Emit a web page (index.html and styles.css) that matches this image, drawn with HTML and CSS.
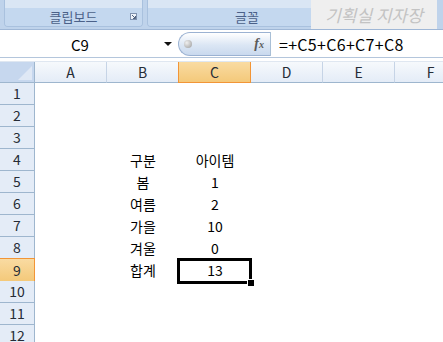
FILE: index.html
```html
<!DOCTYPE html>
<html>
<head>
  <meta charset="UTF-8" />
  <title>기획실 지자장</title>
  <link rel="stylesheet" href="styles.css">
</head>
<body>
  <header class="ribbon">
    <div class="group clipboard">
      <div class="groupTop"></div>
      <div class="groupLabel">
        <span>클립보드</span>
        <svg class="launcher" width="7" height="7" viewBox="0 0 7 7">
          <rect x="0.5" y="0.5" width="6" height="6" fill="#eef3fa" stroke="#8093b0"></rect>
          <path d="M2 2 L5.5 5.5 M5.5 3 V5.5 H3" stroke="#50627f" fill="none"></path>
        </svg>
      </div>
    </div>
    <div class="group font">
      <div class="groupTop"></div>
      <div class="groupLabel"><span>글꼴</span></div>
    </div>
    <div class="watermark">기획실 지자장</div>
  </header>

  <div class="formulaBar">
    <div class="nameBox">
      <span class="cellName">C9</span>
      <span class="dropArrow"></span>
    </div>
    <div class="fxButton">
      <span class="knob"></span>
      <span class="fx">f<small>x</small></span>
    </div>
    <div class="formula">=+C5+C6+C7+C8</div>
  </div>

  <main class="sheet">
    <div class="row colHeads">
      <div class="corner"><span class="cornerTri"></span></div>
      <div class="ch">A</div>
      <div class="ch">B</div>
      <div class="ch active">C</div>
      <div class="ch">D</div>
      <div class="ch">E</div>
      <div class="ch">F</div>
    </div>
    <div class="row"><div class="rh">1</div><div class="c"></div><div class="c"></div><div class="c"></div><div class="c"></div><div class="c"></div><div class="c"></div></div>
    <div class="row"><div class="rh">2</div><div class="c"></div><div class="c"></div><div class="c"></div><div class="c"></div><div class="c"></div><div class="c"></div></div>
    <div class="row"><div class="rh">3</div><div class="c"></div><div class="c"></div><div class="c"></div><div class="c"></div><div class="c"></div><div class="c"></div></div>
    <div class="row"><div class="rh">4</div><div class="c"></div><div class="c">구분</div><div class="c">아이템</div><div class="c"></div><div class="c"></div><div class="c"></div></div>
    <div class="row"><div class="rh">5</div><div class="c"></div><div class="c">봄</div><div class="c">1</div><div class="c"></div><div class="c"></div><div class="c"></div></div>
    <div class="row"><div class="rh">6</div><div class="c"></div><div class="c">여름</div><div class="c">2</div><div class="c"></div><div class="c"></div><div class="c"></div></div>
    <div class="row"><div class="rh">7</div><div class="c"></div><div class="c">가을</div><div class="c">10</div><div class="c"></div><div class="c"></div><div class="c"></div></div>
    <div class="row"><div class="rh">8</div><div class="c"></div><div class="c">겨울</div><div class="c">0</div><div class="c"></div><div class="c"></div><div class="c"></div></div>
    <div class="row"><div class="rh active">9</div><div class="c"></div><div class="c">합계</div><div class="c selected">13<span class="fillHandle"></span></div><div class="c"></div><div class="c"></div><div class="c"></div></div>
    <div class="row"><div class="rh">10</div><div class="c"></div><div class="c"></div><div class="c"></div><div class="c"></div><div class="c"></div><div class="c"></div></div>
    <div class="row"><div class="rh">11</div><div class="c"></div><div class="c"></div><div class="c"></div><div class="c"></div><div class="c"></div><div class="c"></div></div>
    <div class="row"><div class="rh">12</div><div class="c"></div><div class="c"></div><div class="c"></div><div class="c"></div><div class="c"></div><div class="c"></div></div>
  </main>
</body>
</html>
```

FILE: styles.css
```css
body {
  margin: 0;
  width: 443px;
  height: 342px;
  overflow: hidden;
  background: #fff;
  font-family: "Noto Sans CJK KR", "Noto Sans", sans-serif;
}

/* ribbon */
.ribbon {
  position: relative;
  display: flex;
  gap: 4px;
  height: 29px;
  padding-left: 4px;
  background: #bfd3eb;
  border-bottom: 1px solid #9fb7d6;
  overflow: hidden;
}

.group {
  display: flex;
  flex-direction: column;
  height: 27px;
  border: 1px solid #a9c1de;
  border-top: none;
  border-radius: 0 0 4px 4px;
  box-sizing: border-box;
  overflow: hidden;
}

.clipboard {
  width: 139px;
}

.font {
  width: 200px;
}

.groupTop {
  height: 8px;
  background: #dae6f4;
}

.groupLabel {
  flex: 1;
  display: flex;
  align-items: center;
  justify-content: center;
  position: relative;
  background: #c4d8ef;
  font-size: 13px;
  color: #4b6189;
  line-height: 18px;
}

.launcher {
  position: absolute;
  right: 5px;
  top: 5px;
}

.watermark {
  position: absolute;
  top: 0;
  left: 311px;
  width: 126px;
  height: 29px;
  background: #efefef;
  color: #c3c3c3;
  font-size: 17px;
  font-style: italic;
  line-height: 29px;
  text-align: center;
}

/* formula bar */
.formulaBar {
  display: flex;
  align-items: stretch;
  height: 24px;
  padding: 2px 0 1px;
  border-bottom: 1px solid #b4c6dc;
  background: #fff;
}

.nameBox {
  width: 175px;
  display: flex;
  align-items: center;
  position: relative;
  font-size: 15px;
}

.cellName {
  flex: 1;
  text-align: center;
  padding-right: 4px;
}

.dropArrow {
  width: 0;
  height: 0;
  border-left: 4px solid transparent;
  border-right: 4px solid transparent;
  border-top: 4px solid #111;
  margin-right: 3px;
}

.fxButton {
  width: 92px;
  margin-left: 3px;
  display: flex;
  align-items: center;
  justify-content: space-between;
  border: 1px solid #9bb2d2;
  border-right: none;
  border-radius: 12px 0 0 12px;
  background: linear-gradient(#ffffff, #dbe6f4 55%, #c9d9ee);
  box-sizing: border-box;
  padding: 0 6px 0 5px;
}

.knob {
  width: 8px;
  height: 8px;
  border-radius: 50%;
  background: radial-gradient(circle at 35% 35%, #f0f0f0, #9a9a9a);
}

.fx {
  font-family: "Liberation Serif", serif;
  font-style: italic;
  font-weight: bold;
  font-size: 14px;
  color: #5a5a5a;
}

.fx small {
  font-size: 10px;
}

.formula {
  flex: 1;
  border-left: 1px solid #a9bfd6;
  padding-left: 8px;
  font-size: 16px;
  letter-spacing: 0.3px;
  line-height: 24px;
  color: #000;
}

.formulaBar + .sheet {
  margin-top: 3px;
  border-top: 1px solid #dfe7f1;
}

/* sheet */
.sheet {
  width: 470px;
}

.row {
  display: grid;
  grid-template-columns: 35px repeat(6, 72px);
  height: 22px;
}

.colHeads {
  height: 21px;
}

.corner {
  position: relative;
  background: #c6d7ee;
  border-right: 1px solid #9eb6ce;
  border-bottom: 1px solid #9eb6ce;
}

.cornerTri {
  position: absolute;
  right: 2px;
  bottom: 2px;
  width: 0;
  height: 0;
  border-left: 14px solid transparent;
  border-bottom: 14px solid #dfe8f5;
}

.ch {
  background: linear-gradient(#f6f9fc, #e4ecf7);
  border-right: 1px solid #c6d4e6;
  border-bottom: 1px solid #9eb6ce;
  text-align: center;
  font-size: 14px;
  line-height: 20px;
  color: #262c36;
}

.ch.active {
  background: linear-gradient(#f9dba2, #f4c97a);
  border: 1px solid #f29536;
  border-top: none;
  margin-left: -1px;
}

.rh {
  background: #e4ecf7;
  border-right: 1px solid #9eb6ce;
  border-bottom: 1px solid #9eb6ce;
  text-align: center;
  font-size: 14px;
  line-height: 21px;
  color: #262c36;
}

.rh.active {
  background: linear-gradient(#f9dba2, #f4c97a);
  border: 1px solid #f29536;
  border-left: none;
  margin-top: -1px;
  line-height: 22px;
}

.c {
  position: relative;
  text-align: center;
  font-size: 14px;
  line-height: 22px;
  color: #000;
  white-space: nowrap;
}

.selected::before {
  content: "";
  position: absolute;
  top: -1px;
  left: -2px;
  right: -1px;
  bottom: -2px;
  border: 3px solid #000;
}

.fillHandle {
  position: absolute;
  right: -3px;
  bottom: -4px;
  width: 6px;
  height: 6px;
  background: #000;
  border-left: 1px solid #fff;
  border-top: 1px solid #fff;
}
```
